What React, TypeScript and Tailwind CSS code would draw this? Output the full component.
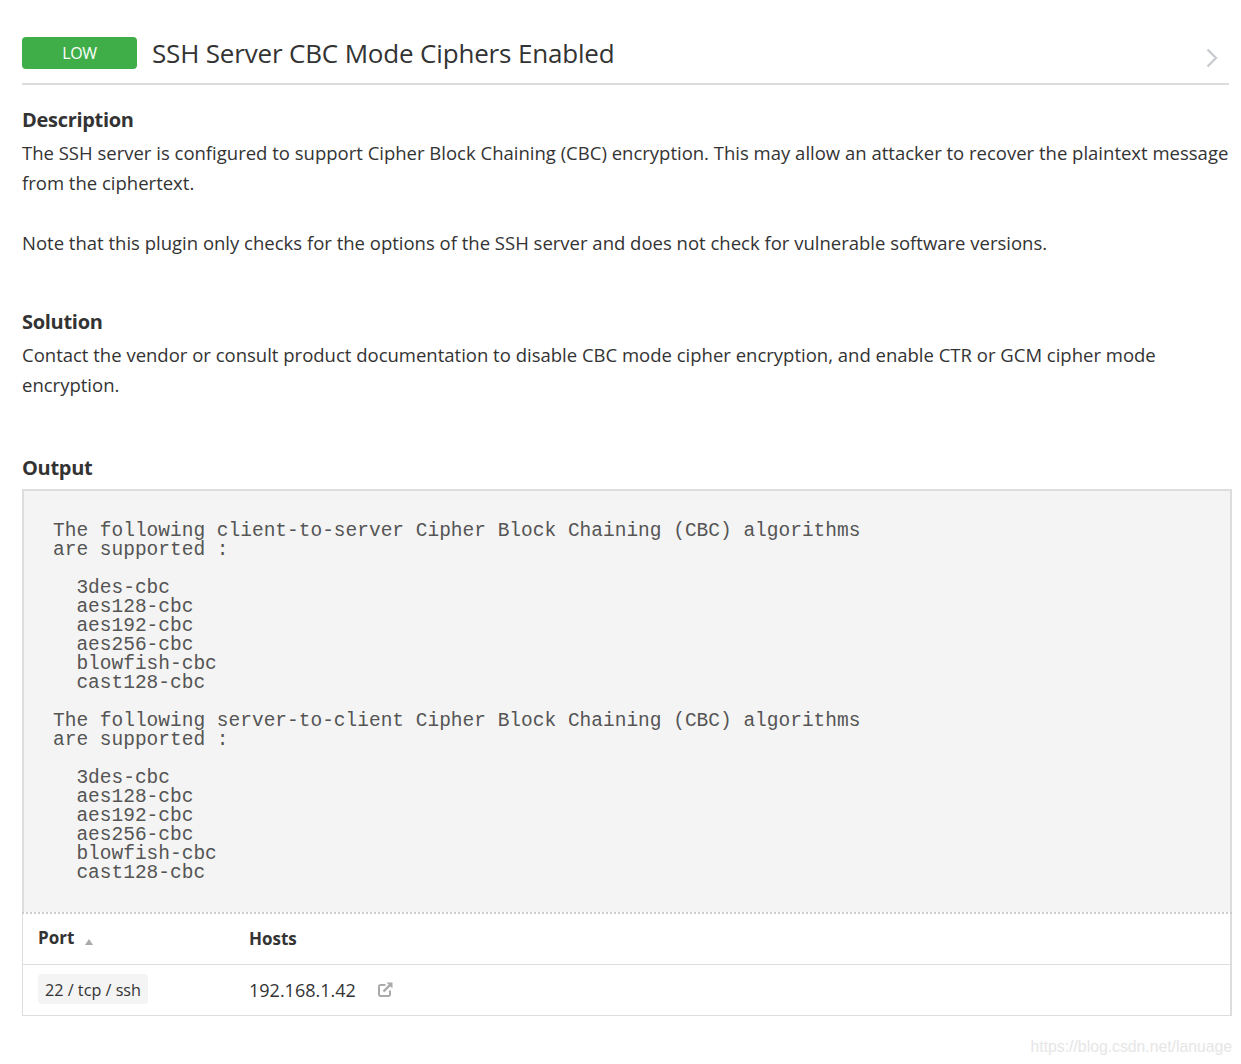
import React from "react";

const output = `The following client-to-server Cipher Block Chaining (CBC) algorithms
are supported :

  3des-cbc
  aes128-cbc
  aes192-cbc
  aes256-cbc
  blowfish-cbc
  cast128-cbc

The following server-to-client Cipher Block Chaining (CBC) algorithms
are supported :

  3des-cbc
  aes128-cbc
  aes192-cbc
  aes256-cbc
  blowfish-cbc
  cast128-cbc`;

function Heading({ children }: { children: React.ReactNode }) {
  return <h3 className="mb-[3px] text-[20px] leading-[30px] font-bold tracking-[-0.3px] text-[#333333]">{children}</h3>;
}

export default function App() {
  return (
    <div className="h-[1064px] w-[1241px] overflow-hidden bg-white font-['Open_Sans',sans-serif] text-[#333333]">
      <div className="pl-[22px] pr-[12px] pt-[36px]">
        <div className="flex h-[49px] items-start justify-between border-b-2 border-[#dddddd] pr-[11px]">
          <div className="flex items-center">
            <span className="flex h-[32px] w-[115px] items-center justify-center rounded-[4px] bg-[#3fae49] text-[16px] tracking-[-0.4px] text-white">
              LOW
            </span>
            <h2 className="ml-[15px] text-[26px] leading-[34px] tracking-[-0.17px] text-[#333333]">SSH Server CBC Mode Ciphers Enabled</h2>
          </div>
          <svg width="12" height="20" viewBox="0 0 12 20" className="mt-[12px]" fill="none">
            <path d="M1.5 1.5 L10 10 L1.5 18.5" stroke="#c8ccd0" strokeWidth="2.4" />
          </svg>
        </div>

        <section className="mt-[20px]">
          <Heading>Description</Heading>
          <p className="text-[18.5px] leading-[30px]">
            The SSH server is configured to support Cipher Block Chaining (CBC) encryption. This may allow an attacker to recover the plaintext message from the ciphertext.
          </p>
          <p className="mt-[30px] text-[18.5px] leading-[30px]">
            Note that this plugin only checks for the options of the SSH server and does not check for vulnerable software versions.
          </p>
        </section>

        <section className="mt-[49px]">
          <Heading>Solution</Heading>
          <p className="text-[18.5px] leading-[30px]">
            Contact the vendor or consult product documentation to disable CBC mode cipher encryption, and enable CTR or GCM cipher mode encryption.
          </p>
        </section>

        <section className="mt-[53px] -mr-[3px]">
          <Heading>Output</Heading>
          <div className="mt-[6px]">
            <div className="border-2 border-b-0 border-[#dddddd] bg-[#f4f4f4] pb-[29px] pl-[29px] pt-[31px]">
              <pre className="font-['Liberation_Mono',monospace] text-[19.5px] leading-[19px] text-[#555555]">{output}</pre>
            </div>
            <div className="border-t-2 border-dotted border-[#cccccc]" />
            <div className="border-b border-l border-r-2 border-[#dddddd] bg-white">
              <div className="flex h-[51px] items-center border-b border-[#dddddd] pl-[15px] text-[17px] font-bold">
                <div className="flex w-[211px] items-center">
                  <span className="-mt-[2px]">Port</span>
                  <svg width="8" height="6" viewBox="0 0 8 6" className="ml-[11px] mt-[5px]">
                    <path d="M4 0 L8 6 L0 6 Z" fill="#aaaaaa" />
                  </svg>
                </div>
                <span className="-mt-[1px]">Hosts</span>
              </div>
              <div className="flex h-[50px] items-center pl-[15px] text-[18px]">
                <div className="-mt-[2px] w-[211px]">
                  <span className="block h-[30px] w-fit rounded-[4px] bg-[#f4f4f4] px-[7px] text-[16.2px] leading-[32px]">22 / tcp / ssh</span>
                </div>
                <span>192.168.1.42</span>
                <svg width="15" height="15" viewBox="0 0 15 15" className="mb-[2px] ml-[22px]" fill="none">
                  <path d="M7.5 3 H2.5 A1.5 1.5 0 0 0 1 4.5 V12.5 A1.5 1.5 0 0 0 2.5 14 H10.5 A1.5 1.5 0 0 0 12 12.5 V8.5" stroke="#aaaaaa" strokeWidth="2" />
                  <path d="M5.5 9.5 L12 3" stroke="#aaaaaa" strokeWidth="2.4" />
                  <path d="M8.5 0.5 H14.5 V6.5 Z" fill="#aaaaaa" />
                </svg>
              </div>
            </div>
          </div>
        </section>
        <div className="mt-[20px] -mr-[3px] text-right font-['Liberation_Sans',sans-serif] text-[15.75px] leading-[22px] text-[#e6e6e6]">
          https://blog.csdn.net/lanuage
        </div>
      </div>
    </div>
  );
}
